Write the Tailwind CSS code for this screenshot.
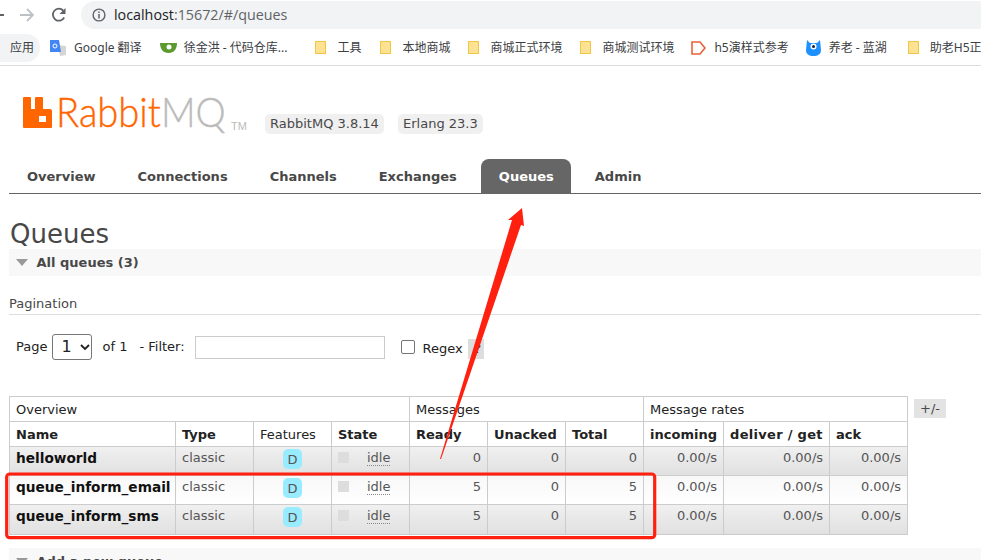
<!DOCTYPE html>
<html lang="en">
<head>
    <meta charset="UTF-8">
    <title>RabbitMQ Management</title>
    <script src="https://cdn.jsdelivr.net/npm/@tailwindcss/browser@4"></script>
</head>
<body class="relative w-[981px] h-[560px] overflow-hidden bg-white font-['DejaVu_Sans',sans-serif] text-[13px] text-[#484848]">

    <!-- browser toolbar -->
    <div class="h-[30px] flex items-center">
        <div class="w-[4px] h-[2px] bg-[#5f6368]"></div>
        <svg class="ml-[16px] w-[14px] h-[14px]" viewBox="0 0 14 14" fill="none" stroke="#bdc1c6" stroke-width="1.8"><path d="M0 7h13M7 1l6 6-6 6"/></svg>
        <svg class="ml-[17px] w-[16px] h-[16px]" viewBox="0 0 16 16" fill="none"><path d="M13.2 10.5A6 6 0 1 1 12.3 3.6" stroke="#5f6368" stroke-width="1.8"/><path d="M14.5 1v6h-6z" fill="#5f6368"/></svg>
        <div class="ml-[14px] flex-1 h-[28px] rounded-l-[14px] bg-[#f1f3f4] flex items-center pl-[11px]">
            <svg class="w-[14px] h-[14px]" viewBox="0 0 14 14" fill="none"><circle cx="7" cy="7" r="5.9" stroke="#5f6368" stroke-width="1.4"/><path d="M7 6v4.4M7 3.4v1.5" stroke="#5f6368" stroke-width="1.5"/></svg>
            <span class="ml-[8px] font-['Open_Sans',sans-serif] text-[14.3px] text-[#202124]">localhost<span class="text-[#5f6368]">:15672/#/queues</span></span>
        </div>
    </div>

    <!-- bookmarks bar -->
    <div class="h-[36px] border-b border-[#dadce0] flex items-center font-['Noto_Sans','Noto_Sans_CJK_SC',sans-serif] text-[12px] text-[#3c4043] whitespace-nowrap overflow-hidden">
        <span class="shrink-0 w-[40px] h-[28px] rounded-r-[14px] bg-[#f1f3f4] flex items-center pl-[10px]">应用</span>
        <svg class="ml-[10px] w-[16px] h-[16px] shrink-0" viewBox="0 0 16 16"><path d="M8 5l8 1v9l-6 1z" fill="#d5d5d5"/><path d="M0 0h9l2 12H0z" fill="#4285f4"/><circle cx="5" cy="6" r="2" fill="none" stroke="#fff" stroke-width="1"/></svg>
        <span class="shrink-0 ml-[8px]">Google 翻译</span>
        <svg class="ml-[18px] w-[17px] h-[12px] shrink-0" viewBox="0 0 17 12"><path d="M0 1h17c0 6-3 10-8.500 10S0 7 0 1z" fill="#5b9a2f"/><circle cx="9" cy="5" r="2.500" fill="#fff"/></svg>
        <span class="shrink-0 ml-[7px]">徐金洪 - 代码仓库...</span>
        <div class="ml-[28px] w-[11px] h-[13px] bg-[#fde293] border border-[#f1c644] shrink-0"></div>
        <span class="shrink-0 ml-[11px]">工具</span>
        <div class="ml-[19px] w-[11px] h-[13px] bg-[#fde293] border border-[#f1c644] shrink-0"></div>
        <span class="shrink-0 ml-[11px]">本地商城</span>
        <div class="ml-[18px] w-[11px] h-[13px] bg-[#fde293] border border-[#f1c644] shrink-0"></div>
        <span class="shrink-0 ml-[11px]">商城正式环境</span>
        <div class="ml-[18px] w-[11px] h-[13px] bg-[#fde293] border border-[#f1c644] shrink-0"></div>
        <span class="shrink-0 ml-[11px]">商城测试环境</span>
        <svg class="ml-[17px] w-[15px] h-[14px] shrink-0" viewBox="0 0 15 14" fill="none"><path d="M1 1h8l5 6-5 6H1z" stroke="#e8623a" stroke-width="1.600"/></svg>
        <span class="shrink-0 ml-[8px]">h5演样式参考</span>
        <svg class="ml-[17px] w-[15px] h-[16px] shrink-0" viewBox="0 0 15 16"><path d="M1 0l3 3h7l3-3 1 10c0 4-3 6-7.500 6S0 14 0 10z" fill="#1e90ff"/><circle cx="7.500" cy="6.500" r="3" fill="#fff"/><circle cx="7.500" cy="6.500" r="1.500" fill="#123"/></svg>
        <span class="shrink-0 ml-[8px]">养老 - 蓝湖</span>
        <div class="ml-[21px] w-[11px] h-[13px] bg-[#fde293] border border-[#f1c644] shrink-0"></div>
        <span class="shrink-0 ml-[11px]">助老H5正式环境</span>
    </div>

    <!-- logo and versions -->
    <div class="h-[93px] flex pl-[23px]">
        <svg class="mt-[31px] w-[29px] h-[31px] shrink-0" viewBox="0 0 29 31"><path fill-rule="evenodd" d="M0 1a1 1 0 0 1 1-1h6a1 1 0 0 1 1 1v11h4V1a1 1 0 0 1 1-1h6a1 1 0 0 1 1 1v11h7a2 2 0 0 1 2 2v16a1 1 0 0 1-1 1H1a1 1 0 0 1-1-1zM16 19v6h7v-6z" fill="#ff6600"/></svg>
        <div class="ml-[4px] mt-[22px] w-[175px] h-[48px] origin-left scale-x-[0.93] font-['Lato',sans-serif] font-light text-[41px] leading-[48px] [-webkit-text-stroke:0.4px] text-[#ff6600] whitespace-nowrap">Rabbit<span class="text-[#bbb]">MQ</span></div>
        <span class="mt-[54px] h-[12px] font-['Liberation_Sans',sans-serif] text-[11px] leading-[12px] text-[#bbb]">TM</span>
        <span class="absolute left-[265px] top-[114px] h-[20px] px-[5px] rounded-[5px] bg-[#f0f0f0] text-[13px] leading-[20px]">RabbitMQ 3.8.14</span>
        <span class="absolute left-[398px] top-[114px] h-[20px] px-[5px] rounded-[5px] bg-[#f0f0f0] text-[13px] leading-[20px]">Erlang 23.3</span>
    </div>

    <!-- nav tabs -->
    <div class="ml-[9px] h-[35px] border-b border-[#666] flex gap-[6px] font-bold text-[13px] leading-[35px]">
        <span class="px-[18px]">Overview</span>
        <span class="px-[18px]">Connections</span>
        <span class="px-[18px]">Channels</span>
        <span class="px-[18px]">Exchanges</span>
        <span class="pl-[18px] pr-[17px] bg-[#666] text-white rounded-t-[8px]">Queues</span>
        <span class="px-[18px]">Admin</span>
    </div>

    <div class="pl-[9px]">
        <h1 class="mt-[21px] h-[34px] text-[26px] leading-[38px] pl-[1px]">Queues</h1>

        <div class="h-[27px] bg-[#f8f8f8] flex items-center font-bold">
            <div class="ml-[7px] w-0 h-0 border-x-[6.500px] border-x-transparent border-t-[7px] border-t-[#999]"></div>
            <span class="ml-[8.500px]">All queues (3)</span>
        </div>

        <h3 class="mt-[18px] h-[21px] leading-[20px] border-b border-[#ddd] text-[13px]">Pagination</h3>

        <div class="mt-[19px] h-[26px] flex items-center text-[#222] text-[13px]">
            <span class="ml-[7px]">Page</span>
            <span class="ml-[5px] w-[40px] h-[26px] border border-[#767676] rounded-[3px] flex items-center pl-[8px] text-[16px]">1
                <svg class="ml-[8px] w-[10px] h-[7px]" viewBox="0 0 10 7" fill="none" stroke="#222" stroke-width="1.800"><path d="M1 1l4 4 4-4"/></svg>
            </span>
            <span class="ml-[10px]">of 1</span>
            <span class="ml-[12px]">- Filter:</span>
            <div class="ml-[10px] w-[190px] h-[23px] border border-[#ccc]"></div>
            <div class="ml-[16px] w-[14px] h-[14px] border border-[#767676] rounded-[2px]"></div>
            <span class="ml-[8px] mt-[3px]">Regex</span>
            <span class="ml-[5px] w-[16px] h-[20px] bg-[#ddd] mt-[3px] pl-[4px] text-center leading-[20px]">?</span>
        </div>

        <!-- queues table -->
        <div class="mt-[36px] flex items-start">
            <table class="w-[898px] table-fixed border-collapse border border-[#ccc] text-[13px]">
                <colgroup>
                    <col class="w-[166px]"><col class="w-[78px]"><col class="w-[78px]"><col class="w-[78px]"><col class="w-[78px]"><col class="w-[78px]"><col class="w-[78px]"><col class="w-[80px]"><col class="w-[106px]"><col class="w-[78px]">
                </colgroup>
                <thead class="text-[#222]">
                    <tr class="h-[25px]">
                        <th colspan="4" class="border border-[#ccc] px-[6px] pt-[2px] text-left font-normal">Overview</th>
                        <th colspan="3" class="border border-[#ccc] px-[6px] pt-[2px] text-left font-normal">Messages</th>
                        <th colspan="3" class="border border-[#ccc] px-[6px] pt-[2px] text-left font-normal">Message rates</th>
                    </tr>
                    <tr class="h-[25px]">
                        <th class="border border-[#ccc] px-[6px] pt-[2px] text-left">Name</th>
                        <th class="border border-[#ccc] px-[6px] pt-[2px] text-left">Type</th>
                        <th class="border border-[#ccc] px-[6px] pt-[2px] text-left font-normal">Features</th>
                        <th class="border border-[#ccc] px-[6px] pt-[2px] text-left">State</th>
                        <th class="border border-[#ccc] px-[6px] pt-[2px] text-left">Ready</th>
                        <th class="border border-[#ccc] px-[6px] pt-[2px] text-left">Unacked</th>
                        <th class="border border-[#ccc] px-[6px] pt-[2px] text-left">Total</th>
                        <th class="border border-[#ccc] px-[6px] pt-[2px] text-left">incoming</th>
                        <th class="border border-[#ccc] px-[6px] pt-[2px] text-left tracking-[0.3px]">deliver / get</th>
                        <th class="border border-[#ccc] px-[6px] pt-[2px] text-left">ack</th>
                    </tr>
                </thead>
                <tbody class="text-[#555]">
                    <tr class="h-[29px] bg-linear-to-b from-[#f0f0f0] to-[#e0e0e0]">
                        <td class="border border-[#ccc] px-[6px] align-top pt-[1px] font-bold text-[13.7px] text-[#111]">helloworld</td>
                        <td class="border border-[#ccc] px-[6px] align-top pt-[1px]">classic</td>
                        <td class="border border-[#ccc] align-top pt-[2px]"><span class="mx-auto block w-[19px] h-[20px] rounded-[5px] bg-[#99ebff] text-center leading-[22px]">D</span></td>
                        <td class="border border-[#ccc] px-[6px] align-top pt-[1px]"><div class="flex"><span class="mt-[4px] w-[11px] h-[11px] bg-[#ddd]"></span><span class="ml-[18px] border-b border-dotted border-[#888] h-[18px]">idle</span></div></td>
                        <td class="border border-[#ccc] px-[6px] align-top pt-[1px] text-right">0</td>
                        <td class="border border-[#ccc] px-[6px] align-top pt-[1px] text-right">0</td>
                        <td class="border border-[#ccc] px-[6px] align-top pt-[1px] text-right">0</td>
                        <td class="border border-[#ccc] px-[6px] align-top pt-[1px] text-right">0.00/s</td>
                        <td class="border border-[#ccc] px-[6px] align-top pt-[1px] text-right">0.00/s</td>
                        <td class="border border-[#ccc] px-[6px] align-top pt-[1px] text-right">0.00/s</td>
                    </tr>
                    <tr class="h-[29px] bg-linear-to-b from-[#f8f8f8] to-white">
                        <td class="border border-[#ccc] px-[6px] align-top pt-[1px] font-bold text-[13.7px] text-[#111]">queue_inform_email</td>
                        <td class="border border-[#ccc] px-[6px] align-top pt-[1px]">classic</td>
                        <td class="border border-[#ccc] align-top pt-[2px]"><span class="mx-auto block w-[19px] h-[20px] rounded-[5px] bg-[#99ebff] text-center leading-[22px]">D</span></td>
                        <td class="border border-[#ccc] px-[6px] align-top pt-[1px]"><div class="flex"><span class="mt-[4px] w-[11px] h-[11px] bg-[#ddd]"></span><span class="ml-[18px] border-b border-dotted border-[#888] h-[18px]">idle</span></div></td>
                        <td class="border border-[#ccc] px-[6px] align-top pt-[1px] text-right">5</td>
                        <td class="border border-[#ccc] px-[6px] align-top pt-[1px] text-right">0</td>
                        <td class="border border-[#ccc] px-[6px] align-top pt-[1px] text-right">5</td>
                        <td class="border border-[#ccc] px-[6px] align-top pt-[1px] text-right">0.00/s</td>
                        <td class="border border-[#ccc] px-[6px] align-top pt-[1px] text-right">0.00/s</td>
                        <td class="border border-[#ccc] px-[6px] align-top pt-[1px] text-right">0.00/s</td>
                    </tr>
                    <tr class="h-[30px] bg-linear-to-b from-[#f0f0f0] to-[#e0e0e0]">
                        <td class="border border-[#ccc] px-[6px] align-top pt-[1px] font-bold text-[13.7px] text-[#111]">queue_inform_sms</td>
                        <td class="border border-[#ccc] px-[6px] align-top pt-[1px]">classic</td>
                        <td class="border border-[#ccc] align-top pt-[2px]"><span class="mx-auto block w-[19px] h-[20px] rounded-[5px] bg-[#99ebff] text-center leading-[22px]">D</span></td>
                        <td class="border border-[#ccc] px-[6px] align-top pt-[1px]"><div class="flex"><span class="mt-[4px] w-[11px] h-[11px] bg-[#ddd]"></span><span class="ml-[18px] border-b border-dotted border-[#888] h-[18px]">idle</span></div></td>
                        <td class="border border-[#ccc] px-[6px] align-top pt-[1px] text-right">5</td>
                        <td class="border border-[#ccc] px-[6px] align-top pt-[1px] text-right">0</td>
                        <td class="border border-[#ccc] px-[6px] align-top pt-[1px] text-right">5</td>
                        <td class="border border-[#ccc] px-[6px] align-top pt-[1px] text-right">0.00/s</td>
                        <td class="border border-[#ccc] px-[6px] align-top pt-[1px] text-right">0.00/s</td>
                        <td class="border border-[#ccc] px-[6px] align-top pt-[1px] text-right">0.00/s</td>
                    </tr>
                </tbody>
            </table>
            <span class="ml-[6px] mt-[3px] w-[32px] h-[19px] bg-[#e3e3e3] text-center leading-[19px]">+/-</span>
        </div>

        <div class="mt-[13px] h-[27px] bg-[#f8f8f8] flex items-center font-bold">
            <div class="ml-[7px] w-0 h-0 border-x-[6.500px] border-x-transparent border-t-[7px] border-t-[#999]"></div>
            <span class="ml-[8.500px]">Add a new queue</span>
        </div>
    </div>

    <!-- hand drawn annotations on top of the screenshot -->
    <svg class="absolute left-0 top-0 w-[981px] h-[560px] pointer-events-none" viewBox="0 0 981 560" fill="none">
        <path d="M440 459L512 220L508 220L522 208L524 226L521 225L441 459z" fill="#ff2010"/>
        <rect x="6.700" y="474" width="648" height="63.700" rx="3" stroke="#ff2010" stroke-width="3.200"/>
    </svg>
</body>
</html>
